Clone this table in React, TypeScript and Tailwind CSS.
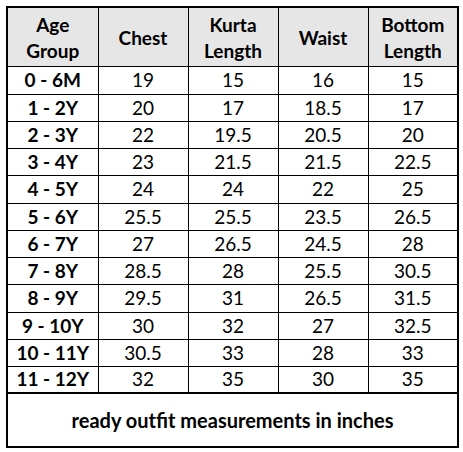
import React from "react";

const rows: [string, string, string, string, string][] = [
  ["0 - 6M", "19", "15", "16", "15"],
  ["1 - 2Y", "20", "17", "18.5", "17"],
  ["2 - 3Y", "22", "19.5", "20.5", "20"],
  ["3 - 4Y", "23", "21.5", "21.5", "22.5"],
  ["4 - 5Y", "24", "24", "22", "25"],
  ["5 - 6Y", "25.5", "25.5", "23.5", "26.5"],
  ["6 - 7Y", "27", "26.5", "24.5", "28"],
  ["7 - 8Y", "28.5", "28", "25.5", "30.5"],
  ["8 - 9Y", "29.5", "31", "26.5", "31.5"],
  ["9 - 10Y", "30", "32", "27", "32.5"],
  ["10 - 11Y", "30.5", "33", "28", "33"],
  ["11 - 12Y", "32", "35", "30", "35"],
];

const headers = [
  ["Age", "Group"],
  ["Chest"],
  ["Kurta", "Length"],
  ["Waist"],
  ["Bottom", "Length"],
];

const App: React.FC = () => {
  return (
    <div className="w-[463px] h-[452px] bg-white pl-[6px] pt-[6px] font-['Lato',sans-serif] text-black">
      <table className="table-fixed border-collapse border-2 border-black w-[451px]">
        <colgroup>
          <col className="w-[91px]" />
          <col className="w-[90px]" />
          <col className="w-[90px]" />
          <col className="w-[90px]" />
          <col className="w-[90px]" />
        </colgroup>
        <thead>
          <tr className="h-[59px] bg-[#e7e6e6]">
            {headers.map((h, i) => (
              <th
                key={i}
                className="border border-black p-0 pt-[2px] text-center align-middle text-[19px] font-bold leading-[26px]"
              >
                {h.map((line) => (
                  <div key={line}>{line}</div>
                ))}
              </th>
            ))}
          </tr>
        </thead>
        <tbody>
          {rows.map((r, ri) => (
            <tr key={r[0]} className={ri % 4 === 0 ? "h-[28px]" : "h-[27px]"}>
              {r.map((v, i) => (
                <td
                  key={i}
                  className={`border border-black p-0 text-center align-middle text-[19px] leading-[24px] ${
                    i === 0 ? "font-bold" : ""
                  }`}
                >
                  {v}
                </td>
              ))}
            </tr>
          ))}
          <tr className="h-[54px]">
            <td
              colSpan={5}
              className="border-2 border-black p-0 text-center align-middle text-[20px] font-bold"
            >
              ready outfit measurements in inches
            </td>
          </tr>
        </tbody>
      </table>
    </div>
  );
};

export default App;
